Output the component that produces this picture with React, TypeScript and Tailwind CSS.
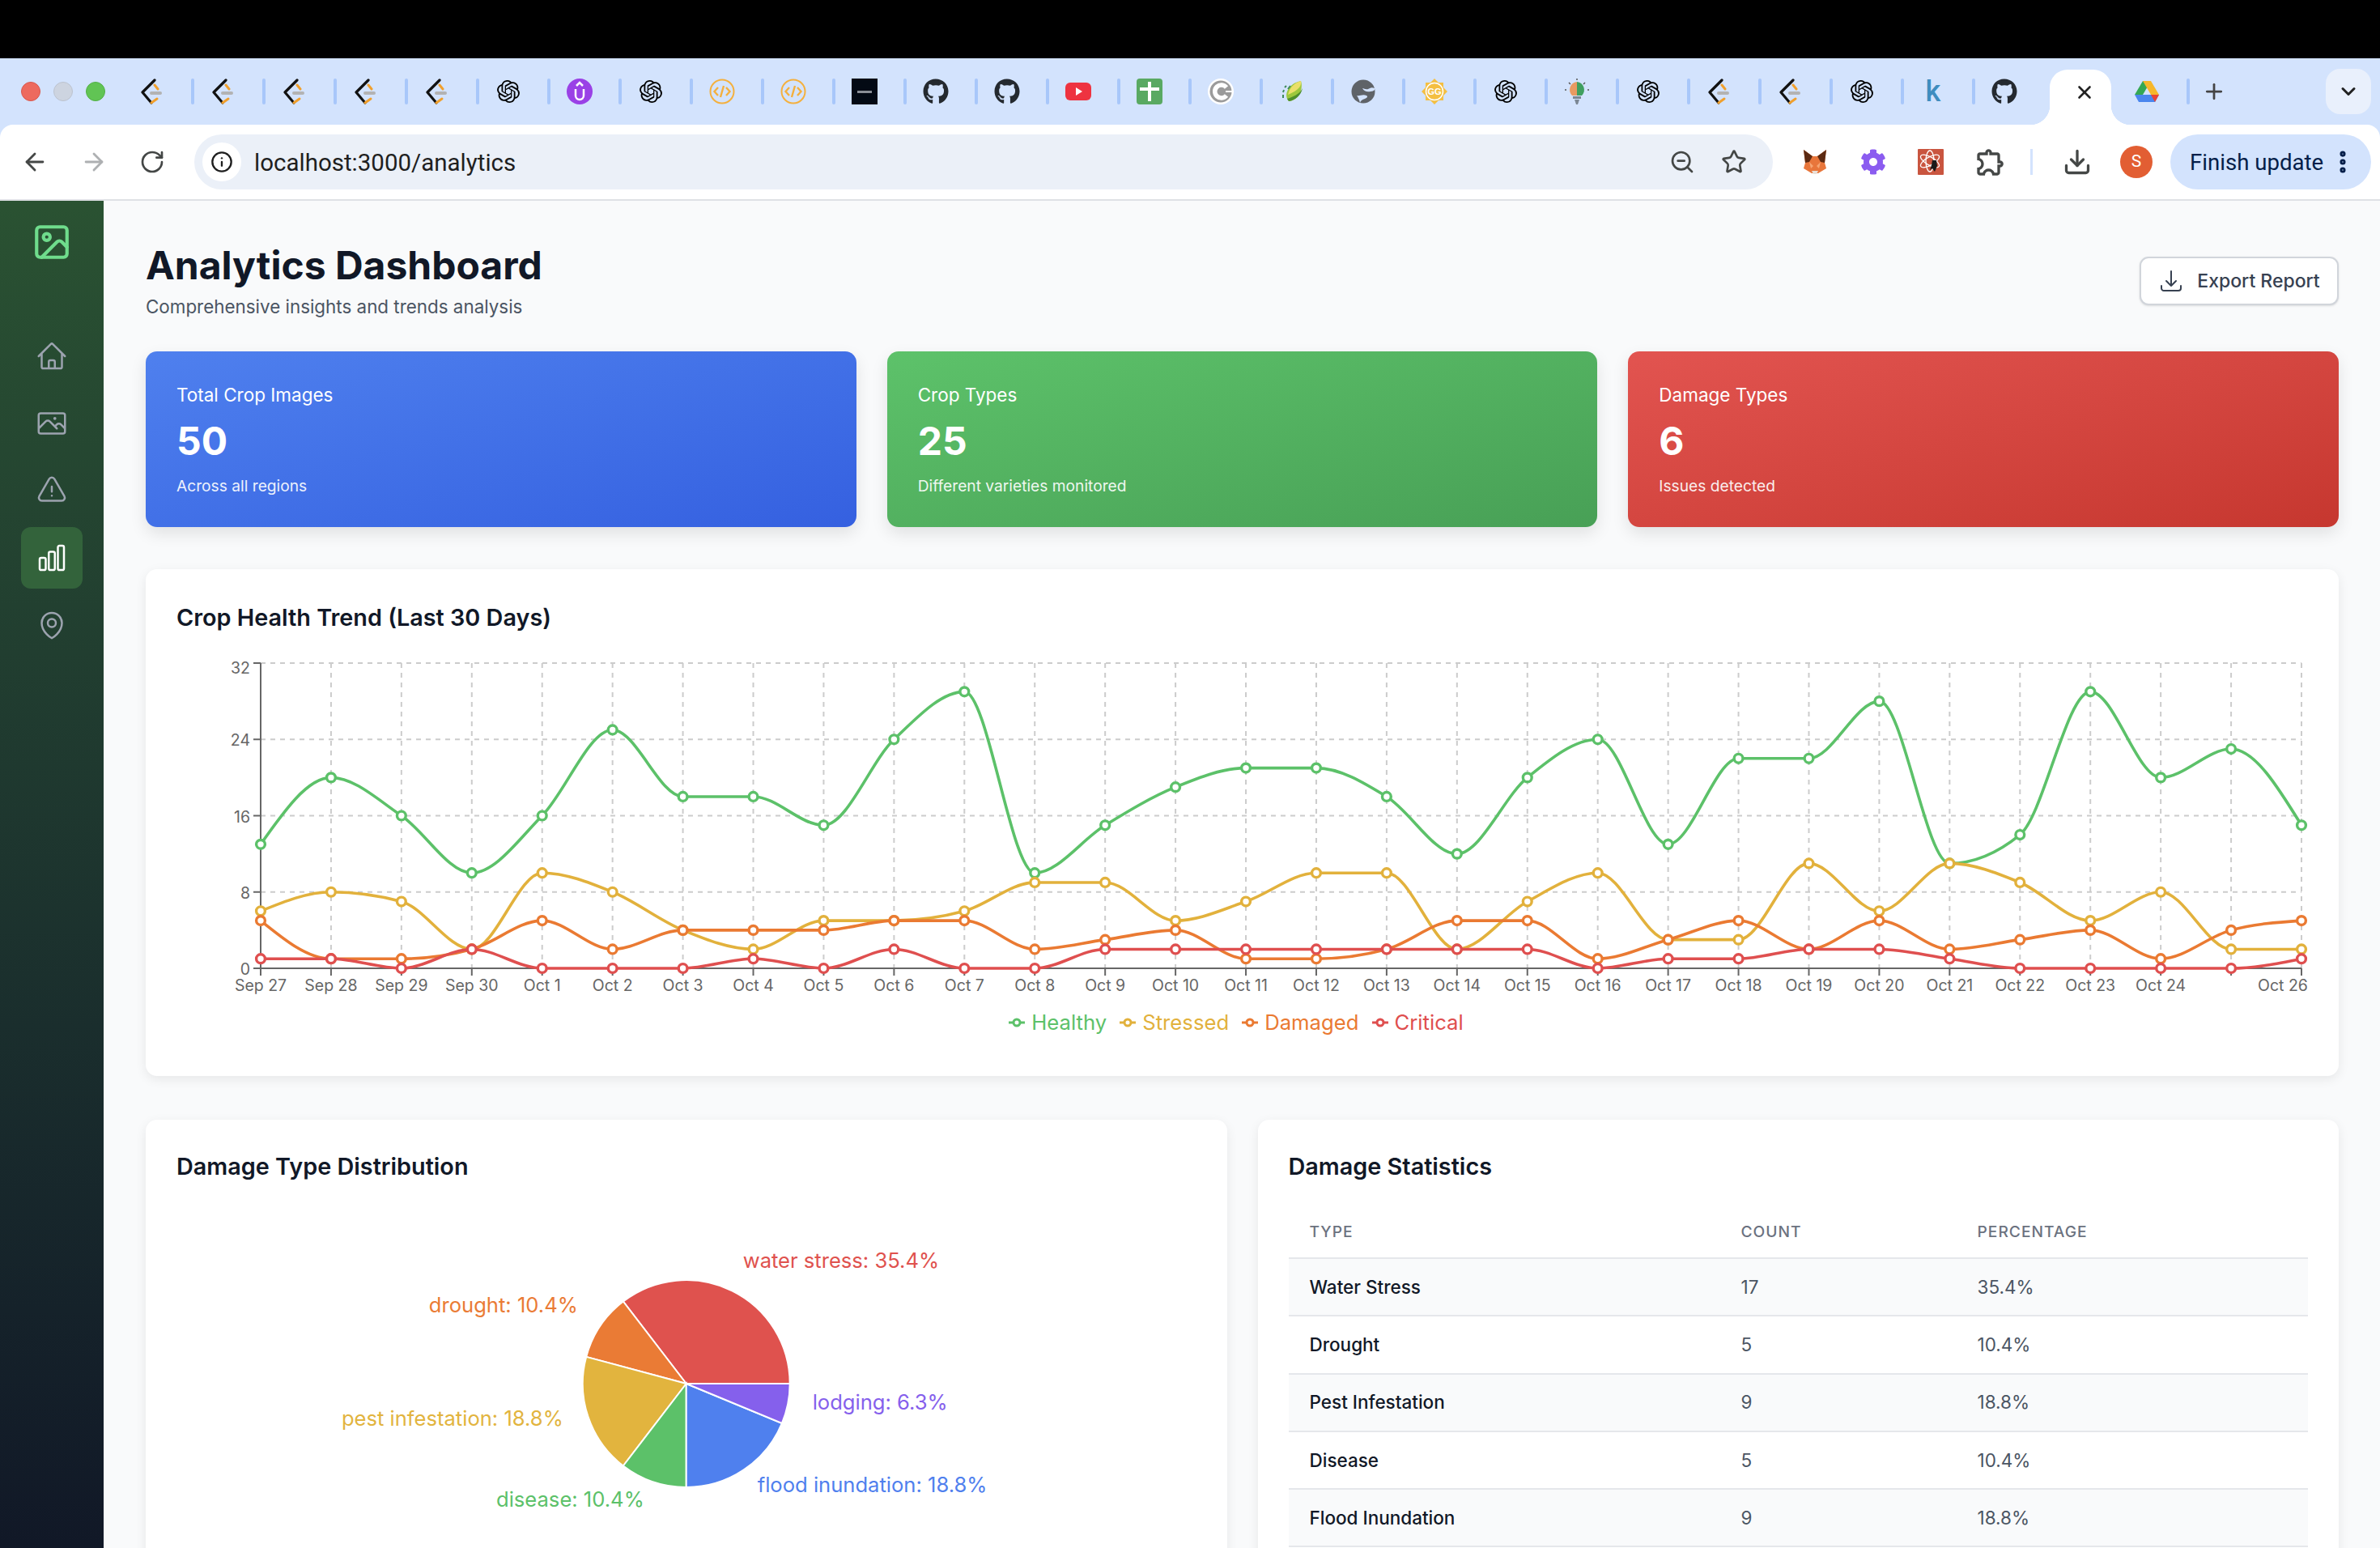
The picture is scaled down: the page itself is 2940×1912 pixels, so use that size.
import React from 'react';
import { ArrowLeft, ArrowRight, ChevronDown, Download, EllipsisVertical, Image as ImageIcon, Info, Plus, RotateCw, Star, X, ZoomOut } from 'lucide-react';
import { FaCog, FaGithub } from 'react-icons/fa';
import { MdOutlineExtension } from 'react-icons/md';
import { SiOpenai } from 'react-icons/si';
import {
  HiOutlineArrowDownTray,
  HiOutlineChartBar,
  HiOutlineExclamationTriangle,
  HiOutlineHome,
  HiOutlineMapPin,
  HiOutlinePhoto,
} from 'react-icons/hi2';

// Favicons
const LeetCode = () => (
  <svg viewBox="0 0 32 32" className="w-8 h-8" fill="none" strokeLinecap="round" strokeLinejoin="round">
    <path d="M19 2 L4 17 L15 30" stroke="#111" strokeWidth="3.2" />
    <path d="M19 8 L23 13 M15 30 L22 25" stroke="#f0a02e" strokeWidth="3" />
    <path d="M15 18 H26" stroke="#b3b3b3" strokeWidth="4" />
  </svg>
);
const OpenAi = () => <SiOpenai className="w-7 h-7 text-black" />;
const Github = () => <FaGithub className="w-8 h-8 text-[#24292f]" />;
const UProfile = () => (
  <svg viewBox="0 0 32 32" className="w-8 h-8" fill="none">
    <circle cx="16" cy="16" r="16" fill="#9a41e6" />
    <path d="M11 13 V21 a5 5 0 0 0 10 0 V13" stroke="white" strokeWidth="2.5" />
    <path d="M12 9 L16 5 L20 9" stroke="white" strokeWidth="2.5" />
  </svg>
);
const CodeRing = () => (
  <svg viewBox="0 0 32 32" className="w-8 h-8" fill="none" stroke="#f4b03e" strokeWidth="2">
    <circle cx="16" cy="16" r="14.5" />
    <path d="M11 11 L6.5 16 L11 21 M21 11 L25.5 16 L21 21 M18 9 L14 23" strokeWidth="2.4" />
  </svg>
);
const BlackSquare = () => (
  <div className="w-8 h-8 bg-[#030a14] flex items-center justify-center">
    <div className="w-[18px] h-[3px] bg-[#8a8f96]" />
  </div>
);
const YouTube = () => (
  <svg viewBox="0 0 32 32" className="w-8 h-8">
    <rect x="0" y="5" width="32" height="22" rx="6" fill="#ee3340" />
    <path d="M13 11 L21 16 L13 21 Z" fill="white" />
  </svg>
);
const GreenCross = () => (
  <svg viewBox="0 0 32 32" className="w-8 h-8">
    <rect width="32" height="32" rx="4" fill="#59a962" />
    <path d="M14 4 H18 V11 H28 V15 H18 V28 H14 V15 H4 V11 H14 Z" fill="white" />
  </svg>
);
const CRing = () => (
  <svg viewBox="0 0 32 32" className="w-8 h-8" fill="none">
    <circle cx="16" cy="16" r="16" fill="white" />
    <circle cx="16" cy="16" r="13.5" fill="#9b9b9b" />
    <path d="M23 11 A8 8 0 1 0 23 21" stroke="white" strokeWidth="5.5" />
    <path d="M22 16 H32" stroke="white" strokeWidth="2" />
  </svg>
);
const Leaf = () => (
  <svg viewBox="0 0 32 32" className="w-8 h-8">
    <path d="M27 3 C30 12 25 27 12 28 C5 21 11 6 27 3 Z" fill="#9cc83c" />
    <path d="M27 3 C28 9 25 14 11 20 C13 11 19 5 27 3 Z" fill="#eadf6a" />
    <path d="M12 28 C20 27 27 21 29 12 C25 20 16 23 10 25 Z" fill="#4d8f2c" />
    <path d="M9 9 L7 11 M6 14 L5 17 M5 20 L5 24 M14 9 L11 13" stroke="#3e8a5a" strokeWidth="2" />
  </svg>
);
const Globe = () => (
  <svg viewBox="0 0 32 32" className="w-8 h-8">
    <circle cx="16" cy="16" r="14.5" fill="#5f6368" />
    <path d="M30 12 C26 10 24 12 22 13 C19 14 17 12 15 12 C17 16 21 17 25 16 C27 16 29 15 30 14 Z M8 21 C12 22 15 19 20 21 C22 22 21 24 18 25 C15 26 13 27 12 30 C11 26 10 24 8 21 Z" fill="#d3e3fd" />
  </svg>
);
const GGStar = () => (
  <svg viewBox="0 0 32 32" className="w-8 h-8">
    <path d="M16 0 L21 5 H27 V11 L32 16 L27 21 V27 H21 L16 32 L11 27 H5 V21 L0 16 L5 11 V5 H11 Z" fill="#f4bf42" />
    <circle cx="16" cy="16" r="10.5" fill="none" stroke="white" strokeWidth="1.5" />
    <text x="16" y="20" textAnchor="middle" fontSize="11" fontWeight="700" fill="white" fontFamily="Liberation Sans, sans-serif">GG</text>
  </svg>
);
const Bulb = () => (
  <svg viewBox="0 0 32 32" className="w-8 h-8">
    <path d="M16 4 A10 10 0 0 0 10 21 L16 21 Z" fill="#e89a62" />
    <path d="M16 4 A10 10 0 0 1 22 21 L16 21 Z" fill="#3f9f5f" />
    <rect x="11" y="22" width="10" height="3" fill="#7b8794" />
    <path d="M13 26 H19 L17 32 H15 Z" fill="#7b8794" />
    <path d="M16 0 V2 M3 14 H1 M31 14 H29 M6 5 L8 7 M26 5 L24 7" stroke="#555" strokeWidth="1.5" />
  </svg>
);
const Drive = () => (
  <svg viewBox="0 0 32 28" className="w-8 h-7">
    <path d="M11 1 H21 L11 18 H1 Z" fill="#34a853" />
    <path d="M21 1 L31 18 H21 L11 1 Z" fill="#f6b72b" />
    <path d="M1 18 H31 L26 27 H6 Z" fill="#4a86ee" />
    <path d="M21 18 H31 L26 27 Z" fill="#ea4335" />
  </svg>
);
const Fox = () => (
  <svg viewBox="0 0 32 32" className="w-8 h-8">
    <path d="M2 1 L13 9 H19 L30 1 L28 17 L30 24 L20 30 H12 L2 24 L4 17 Z" fill="#e8763b" />
    <path d="M2 1 L13 9 L9 16 L4 17 Z M30 1 L19 9 L23 16 L28 17 Z" fill="#5c2a12" />
    <path d="M9 16 L14 21 L11 24 Z M23 16 L18 21 L21 24 Z" fill="#f6a673" />
    <path d="M12 27 H20 L18 31 H14 Z" fill="#e9e0d8" />
  </svg>
);
const AtomBox = () => (
  <svg viewBox="0 0 32 32" className="w-8 h-8" fill="none">
    <rect width="32" height="32" rx="1" fill="#c9553f" />
    <g stroke="white" strokeWidth="1.3">
      <ellipse cx="15" cy="15" rx="13" ry="5" transform="rotate(30 15 15)" />
      <ellipse cx="15" cy="15" rx="13" ry="5" transform="rotate(-30 15 15)" />
      <ellipse cx="15" cy="15" rx="5" ry="13" />
    </g>
    <path d="M18 14 L23 14 L24 21 L21 28 L18 24 L15 26 L17 20 Z" fill="#1a1a1a" />
  </svg>
);

const favicons = [
  LeetCode, LeetCode, LeetCode, LeetCode, LeetCode, OpenAi, UProfile, OpenAi, CodeRing, CodeRing,
  BlackSquare, Github, Github, YouTube, GreenCross, CRing, Leaf, Globe, GGStar, OpenAi,
  Bulb, OpenAi, LeetCode, LeetCode, OpenAi, () => <span className="text-[36px] leading-8 font-medium text-[#3f8dbf]">k</span>, Github,
];

const BrowserChrome = () => (
  <div className="font-['Roboto',sans-serif]">
    <div className="h-[72px] bg-black" />
    <div className="bg-[#d3e3fd]">
      <div className="h-[82px] flex items-center pl-[26px]">
        <div className="flex gap-4 mr-[22px]">
          <div className="w-6 h-6 rounded-full bg-[#ed6a5e] border border-[#d9574c]" />
          <div className="w-6 h-6 rounded-full bg-[#cdd4e0] border border-[#bcc3cf]" />
          <div className="w-6 h-6 rounded-full bg-[#61c454] border border-[#52b045]" />
        </div>
        {favicons.map((Icon, i) => (
          <div key={i} className="w-[88px] h-8 flex items-center pl-5 shrink-0">
            <div className="w-8 h-8 flex items-center justify-center">
              <Icon />
            </div>
            {i < favicons.length - 1 && <div className="ml-auto w-[4px] h-8 rounded-sm bg-[#a8c7fa]" />}
          </div>
        ))}
        <div className="relative ml-[4px] w-[76px] h-[68px] mt-[14px] bg-white rounded-t-[22px] flex items-start justify-center pt-[15px] pl-[10px] shrink-0">
          <div className="absolute bottom-0 -left-[24px] w-[24px] h-[24px] bg-[radial-gradient(circle_at_0_0,transparent_24px,white_24.5px)]" />
          <div className="absolute bottom-0 -right-[24px] w-[24px] h-[24px] bg-[radial-gradient(circle_at_100%_0,transparent_24px,white_24.5px)]" />
          <X className="w-[26px] h-[26px] text-[#222]" strokeWidth={2.4} />
        </div>
        <div className="ml-[28px] w-8 h-8 flex items-center justify-center">
          <Drive />
        </div>
        <div className="ml-[33px] w-[4px] h-8 rounded-sm bg-[#a8c7fa]" />
        <Plus className="ml-[15px] w-[30px] h-[30px] text-[#444]" strokeWidth={2.2} />
        <div className="ml-[123px] w-[56px] h-[56px] rounded-[18px] bg-[#e9f0fc] flex items-center justify-center">
          <ChevronDown className="w-7 h-7 text-[#222]" strokeWidth={2.6} />
        </div>
      </div>
      <div className="h-[94px] bg-white rounded-t-[16px] border-b-2 border-[#dfe1e5] flex items-center text-[#444746]">
        <ArrowLeft className="ml-[26px] w-[34px] h-[34px]" strokeWidth={2} />
        <ArrowRight className="ml-[39px] w-[34px] h-[34px] text-[#aeb0b2]" strokeWidth={2} />
        <RotateCw className="ml-[39px] w-[32px] h-[32px]" strokeWidth={2} />
        <div className="ml-[36px] w-[1950px] h-[68px] rounded-full bg-[#ebf0f8] flex items-center pl-[10px]">
          <div className="w-12 h-12 rounded-full bg-white flex items-center justify-center">
            <Info className="w-[28px] h-[28px] text-[#1f1f1f]" strokeWidth={2} />
          </div>
          <span className="ml-4 pt-[2px] text-[29.5px] text-[#1f1f1f]">localhost:3000/analytics</span>
          <ZoomOut className="ml-auto w-[32px] h-[32px] text-[#444746]" strokeWidth={2} />
          <Star className="ml-[32px] mr-[32px] w-[32px] h-[32px] text-[#444746]" strokeWidth={2} />
        </div>
        <div className="ml-[36px] flex items-center">
          <Fox />
          <FaCog className="ml-[40px] w-8 h-8 text-[#8b5cf0]" />
          <div className="ml-[39px]">
            <AtomBox />
          </div>
          <MdOutlineExtension className="ml-[38px] w-[40px] h-[40px] text-[#444746]" />
        </div>
        <div className="ml-[29px] w-[3px] h-8 bg-[#d3e3fd]" />
        <Download className="ml-[37px] w-[36px] h-[36px]" strokeWidth={2.2} />
        <div className="ml-[35px] w-[40px] h-[40px] rounded-full bg-[#e25e33] flex items-center justify-center text-white text-[21px]">S</div>
        <div className="ml-[22px] w-[248px] h-[68px] rounded-full bg-[#d3e3fd] flex items-center pl-[24px] text-[#041e49]">
          <span className="pt-[2px] text-[27.6px] whitespace-nowrap">Finish update</span>
          <EllipsisVertical className="ml-auto mr-[18px] w-[34px] h-[34px]" strokeWidth={3} />
        </div>
      </div>
    </div>
  </div>
);

const Sidebar = () => (
  <aside className="w-[128px] shrink-0 bg-gradient-to-b from-[#2a5232] to-[#111827] flex flex-col items-center">
    <ImageIcon className="mt-[26px] w-[50px] h-[50px] text-[#6fdc8c]" strokeWidth={2} />
    <nav className="mt-[78px] flex flex-col items-center gap-[7px] text-[#9ca3af]">
      <div className="w-[76px] h-[76px] flex items-center justify-center"><HiOutlineHome className="w-[40px] h-[40px]" /></div>
      <div className="w-[76px] h-[76px] flex items-center justify-center"><HiOutlinePhoto className="w-[40px] h-[40px]" /></div>
      <div className="w-[76px] h-[76px] flex items-center justify-center"><HiOutlineExclamationTriangle className="w-[40px] h-[40px]" /></div>
      <div className="w-[76px] h-[76px] rounded-[12px] bg-[#33633b] text-white flex items-center justify-center"><HiOutlineChartBar className="w-[40px] h-[40px]" /></div>
      <div className="w-[76px] h-[76px] flex items-center justify-center"><HiOutlineMapPin className="w-[40px] h-[40px]" /></div>
    </nav>
  </aside>
);

const StatCard = ({ label, value, note, bg }: { label: string; value: string; note: string; bg: string }) => (
  <div className={`rounded-[14px] p-[38px] pb-[37px] text-white shadow-[0_8px_20px_rgba(0,0,0,0.1)] ${bg}`}>
    <div className="text-[22.5px] leading-[32px]">{label}</div>
    <div className="mt-3 text-[48px] leading-[58px] font-bold">{value}</div>
    <div className="mt-3 text-[19.2px] leading-[28px] opacity-90">{note}</div>
  </div>
);

// Chart data
const dates = [
  'Sep 27', 'Sep 28', 'Sep 29', 'Sep 30', 'Oct 1', 'Oct 2', 'Oct 3', 'Oct 4', 'Oct 5', 'Oct 6',
  'Oct 7', 'Oct 8', 'Oct 9', 'Oct 10', 'Oct 11', 'Oct 12', 'Oct 13', 'Oct 14', 'Oct 15', 'Oct 16',
  'Oct 17', 'Oct 18', 'Oct 19', 'Oct 20', 'Oct 21', 'Oct 22', 'Oct 23', 'Oct 24', '', 'Oct 26',
];
const series = [
  { name: 'Healthy', color: '#5cc169', values: [13, 20, 16, 10, 16, 25, 18, 18, 15, 24, 29, 10, 15, 19, 21, 21, 18, 12, 20, 24, 13, 22, 22, 28, 11, 14, 29, 20, 23, 15] },
  { name: 'Stressed', color: '#e2b13c', values: [6, 8, 7, 2, 10, 8, 4, 2, 5, 5, 6, 9, 9, 5, 7, 10, 10, 2, 7, 10, 3, 3, 11, 6, 11, 9, 5, 8, 2, 2] },
  { name: 'Damaged', color: '#ea7a32', values: [5, 1, 1, 2, 5, 2, 4, 4, 4, 5, 5, 2, 3, 4, 1, 1, 2, 5, 5, 1, 3, 5, 2, 5, 2, 3, 4, 1, 4, 5] },
  { name: 'Critical', color: '#df4f4f', values: [1, 1, 0, 2, 0, 0, 0, 1, 0, 2, 0, 0, 2, 2, 2, 2, 2, 2, 2, 0, 1, 1, 2, 2, 1, 0, 0, 0, 0, 1] },
];

const X0 = 322;
const X1 = 2843;
const Y0 = 1196;
const Y32 = 819;
const xAt = (i: number) => X0 + ((X1 - X0) * i) / 29;
const yAt = (v: number) => Y0 - ((Y0 - Y32) * v) / 32;

// same curve as d3 curveMonotoneX
const monotonePath = (pts: [number, number][]) => {
  const n = pts.length;
  const slopes: number[] = [];
  for (let i = 0; i < n - 1; i++) slopes.push((pts[i + 1][1] - pts[i][1]) / (pts[i + 1][0] - pts[i][0]));
  const t: number[] = new Array(n).fill(0);
  for (let i = 1; i < n - 1; i++) {
    const s0 = slopes[i - 1];
    const s1 = slopes[i];
    const p = (s0 + s1) / 2;
    t[i] = (Math.sign(s0) + Math.sign(s1)) * Math.min(Math.abs(s0), Math.abs(s1), 0.5 * Math.abs(p)) || 0;
  }
  t[0] = (3 * slopes[0] - t[1]) / 2;
  t[n - 1] = (3 * slopes[n - 2] - t[n - 2]) / 2;
  let d = `M${pts[0][0]},${pts[0][1]}`;
  for (let i = 0; i < n - 1; i++) {
    const dx = (pts[i + 1][0] - pts[i][0]) / 3;
    d += `C${pts[i][0] + dx},${pts[i][1] + dx * t[i]} ${pts[i + 1][0] - dx},${pts[i + 1][1] - dx * t[i + 1]} ${pts[i + 1][0]},${pts[i + 1][1]}`;
  }
  return d;
};

const TrendChart = () => (
  <svg viewBox="218 800 2633 440" className="block w-full h-[440px]" fontFamily="Inter, sans-serif">
    {[0, 8, 16, 24, 32].map((v) => (
      <g key={v}>
        <line x1={X0} x2={X1} y1={yAt(v)} y2={yAt(v)} stroke="#ccc" strokeWidth="2" strokeDasharray="6 6" />
        <line x1={X0 - 9} x2={X0} y1={yAt(v)} y2={yAt(v)} stroke="#666" strokeWidth="2" />
        <text x={309} y={yAt(v) + (v === 32 ? 13 : 8)} textAnchor="end" fontSize="19.5" fill="#666">{v}</text>
      </g>
    ))}
    {dates.map((d, i) => (
      <g key={i}>
        <line x1={xAt(i)} x2={xAt(i)} y1={Y32} y2={Y0} stroke="#ccc" strokeWidth="2" strokeDasharray="6 6" />
        <line x1={xAt(i)} x2={xAt(i)} y1={Y0} y2={Y0 + 9} stroke="#666" strokeWidth="2" />
        {d && <text x={i === 29 ? 2820 : xAt(i)} y={1224} textAnchor="middle" fontSize="19.5" fill="#666">{d}</text>}
      </g>
    ))}
    <line x1={X0} x2={X0} y1={Y32} y2={Y0} stroke="#666" strokeWidth="2" />
    <line x1={X0} x2={X1} y1={Y0} y2={Y0} stroke="#666" strokeWidth="2" />
    {series.map((s) => (
      <g key={s.name}>
        <path d={monotonePath(s.values.map((v, i) => [xAt(i), yAt(v)]))} fill="none" stroke={s.color} strokeWidth="3.6" />
        {s.values.map((v, i) => (
          <circle key={i} cx={xAt(i)} cy={yAt(v)} r="5.4" fill="white" stroke={s.color} strokeWidth="3.4" />
        ))}
      </g>
    ))}
  </svg>
);

const Legend = () => (
  <div className="h-[50px] pb-[3px] flex items-center justify-center gap-4 pr-[15px]">
    {series.map((s) => (
      <div key={s.name} className="flex items-center gap-2 text-[25.7px]" style={{ color: s.color }}>
        <svg viewBox="0 0 20 20" className="w-5 h-5" fill="none">
          <path d="M0 10 H20" stroke={s.color} strokeWidth="3" />
          <circle cx="10" cy="10" r="4" fill="white" stroke={s.color} strokeWidth="3" />
        </svg>
        {s.name}
      </div>
    ))}
  </div>
);

const slices = [
  { name: 'water stress: 35.4%', count: 17, color: '#df524e', x: 918, y: 1567, anchor: 'start' },
  { name: 'drought: 10.4%', count: 5, color: '#ea7b35', x: 714, y: 1622, anchor: 'end' },
  { name: 'pest infestation: 18.8%', count: 9, color: '#e2b43e', x: 696, y: 1762, anchor: 'end' },
  { name: 'disease: 10.4%', count: 5, color: '#5cc169', x: 796, y: 1862, anchor: 'end' },
  { name: 'flood inundation: 18.8%', count: 9, color: '#4f80ee', x: 936, y: 1844, anchor: 'start' },
  { name: 'lodging: 6.3%', count: 3, color: '#8560ec', x: 1004, y: 1742, anchor: 'start' },
];

const PieChart = () => {
  const cx = 848;
  const cy = 1710;
  const r = 128;
  let angle = 0;
  return (
    <svg viewBox="218 1481 1260 420" className="block w-full h-[420px]" fontFamily="Inter, sans-serif">
      {slices.map((s) => {
        const a0 = angle;
        const a1 = angle + (s.count / 48) * 2 * Math.PI;
        angle = a1;
        const large = a1 - a0 > Math.PI ? 1 : 0;
        const d = `M${cx},${cy}L${cx + r * Math.cos(a0)},${cy - r * Math.sin(a0)}A${r},${r} 0 ${large} 0 ${cx + r * Math.cos(a1)},${cy - r * Math.sin(a1)}Z`;
        return <path key={s.name} d={d} fill={s.color} stroke="white" strokeWidth="2" />;
      })}
      {slices.map((s) => (
        <text key={s.name} x={s.x} y={s.y} textAnchor={s.anchor as 'start' | 'end'} fontSize="25.6" fill={s.color}>{s.name}</text>
      ))}
    </svg>
  );
};

const stats = [
  ['Water Stress', '17', '35.4%'],
  ['Drought', '5', '10.4%'],
  ['Pest Infestation', '9', '18.8%'],
  ['Disease', '5', '10.4%'],
  ['Flood Inundation', '9', '18.8%'],
];

const StatsTable = () => (
  <table className="mt-[29px] w-full table-fixed text-left">
    <thead>
      <tr className="h-[64px] border-b-2 border-[#e5e7eb] text-[19.2px] text-[#6b7280] uppercase tracking-[1px]">
        <th className="w-[533px] pl-[26px] font-medium">Type</th>
        <th className="w-[292px] pl-[26px] font-medium">Count</th>
        <th className="pl-[26px] font-medium">Percentage</th>
      </tr>
    </thead>
    <tbody>
      {stats.map((row, i) => (
        <tr key={row[0]} className={`h-[71.3px] border-b-2 border-[#e5e7eb] text-[22.5px] ${i % 2 === 0 ? 'bg-[#f9fafb]' : 'bg-white'}`}>
          <td className="pl-[26px] font-medium text-[#111827]">{row[0]}</td>
          <td className="pl-[26px] text-[#4b5563]">{row[1]}</td>
          <td className="pl-[26px] text-[#4b5563]">{row[2]}</td>
        </tr>
      ))}
    </tbody>
  </table>
);

const App: React.FC = () => (
  <div className="h-[1912px] overflow-hidden flex flex-col font-['Inter',sans-serif]">
    <BrowserChrome />
    <div className="flex flex-1 min-h-0">
      <Sidebar />
      <main className="flex-1 min-w-0 bg-[#f9fafb] pt-[51px] pl-[52px] pr-[51px]">
        <div className="flex items-center justify-between mb-[39px]">
          <div>
            <h1 className="text-[48px] leading-[58px] font-bold text-[#111827]">Analytics Dashboard</h1>
            <p className="mt-[6px] text-[22.4px] leading-[32px] text-[#4b5563]">Comprehensive insights and trends analysis</p>
          </div>
          <button className="w-[246px] h-[60px] rounded-[11px] bg-white border-2 border-[#d1d5db] shadow-sm flex items-center justify-center gap-[16px] text-[23px] font-medium text-[#374151]">
            <HiOutlineArrowDownTray className="w-[32px] h-[32px]" />
            Export Report
          </button>
        </div>

        <div className="grid grid-cols-3 gap-[38px] mb-[52px]">
          <StatCard label="Total Crop Images" value="50" note="Across all regions" bg="bg-gradient-to-br from-[#4f80ee] to-[#3560e0]" />
          <StatCard label="Crop Types" value="25" note="Different varieties monitored" bg="bg-gradient-to-br from-[#5dc26a] to-[#48a056]" />
          <StatCard label="Damage Types" value="6" note="Issues detected" bg="bg-gradient-to-br from-[#e25450] to-[#c6372f]" />
        </div>

        <section className="h-[626px] rounded-[14px] bg-white p-[38px] shadow-[0_4px_14px_rgba(0,0,0,0.08)] mb-[54px]">
          <h2 className="text-[28.8px] leading-[44px] font-semibold text-[#111827] mb-[15px]">Crop Health Trend (Last 30 Days)</h2>
          <TrendChart />
          <Legend />
        </section>

        <div className="grid grid-cols-2 gap-[38px]">
          <section className="rounded-[14px] bg-white p-[38px] shadow-[0_4px_14px_rgba(0,0,0,0.08)]">
            <h2 className="text-[28.8px] leading-[40px] font-semibold text-[#111827] mb-[19px]">Damage Type Distribution</h2>
            <PieChart />
          </section>
          <section className="rounded-[14px] bg-white p-[38px] shadow-[0_4px_14px_rgba(0,0,0,0.08)]">
            <h2 className="text-[28.8px] leading-[40px] font-semibold text-[#111827]">Damage Statistics</h2>
            <StatsTable />
          </section>
        </div>
      </main>
    </div>
  </div>
);

export default App;
